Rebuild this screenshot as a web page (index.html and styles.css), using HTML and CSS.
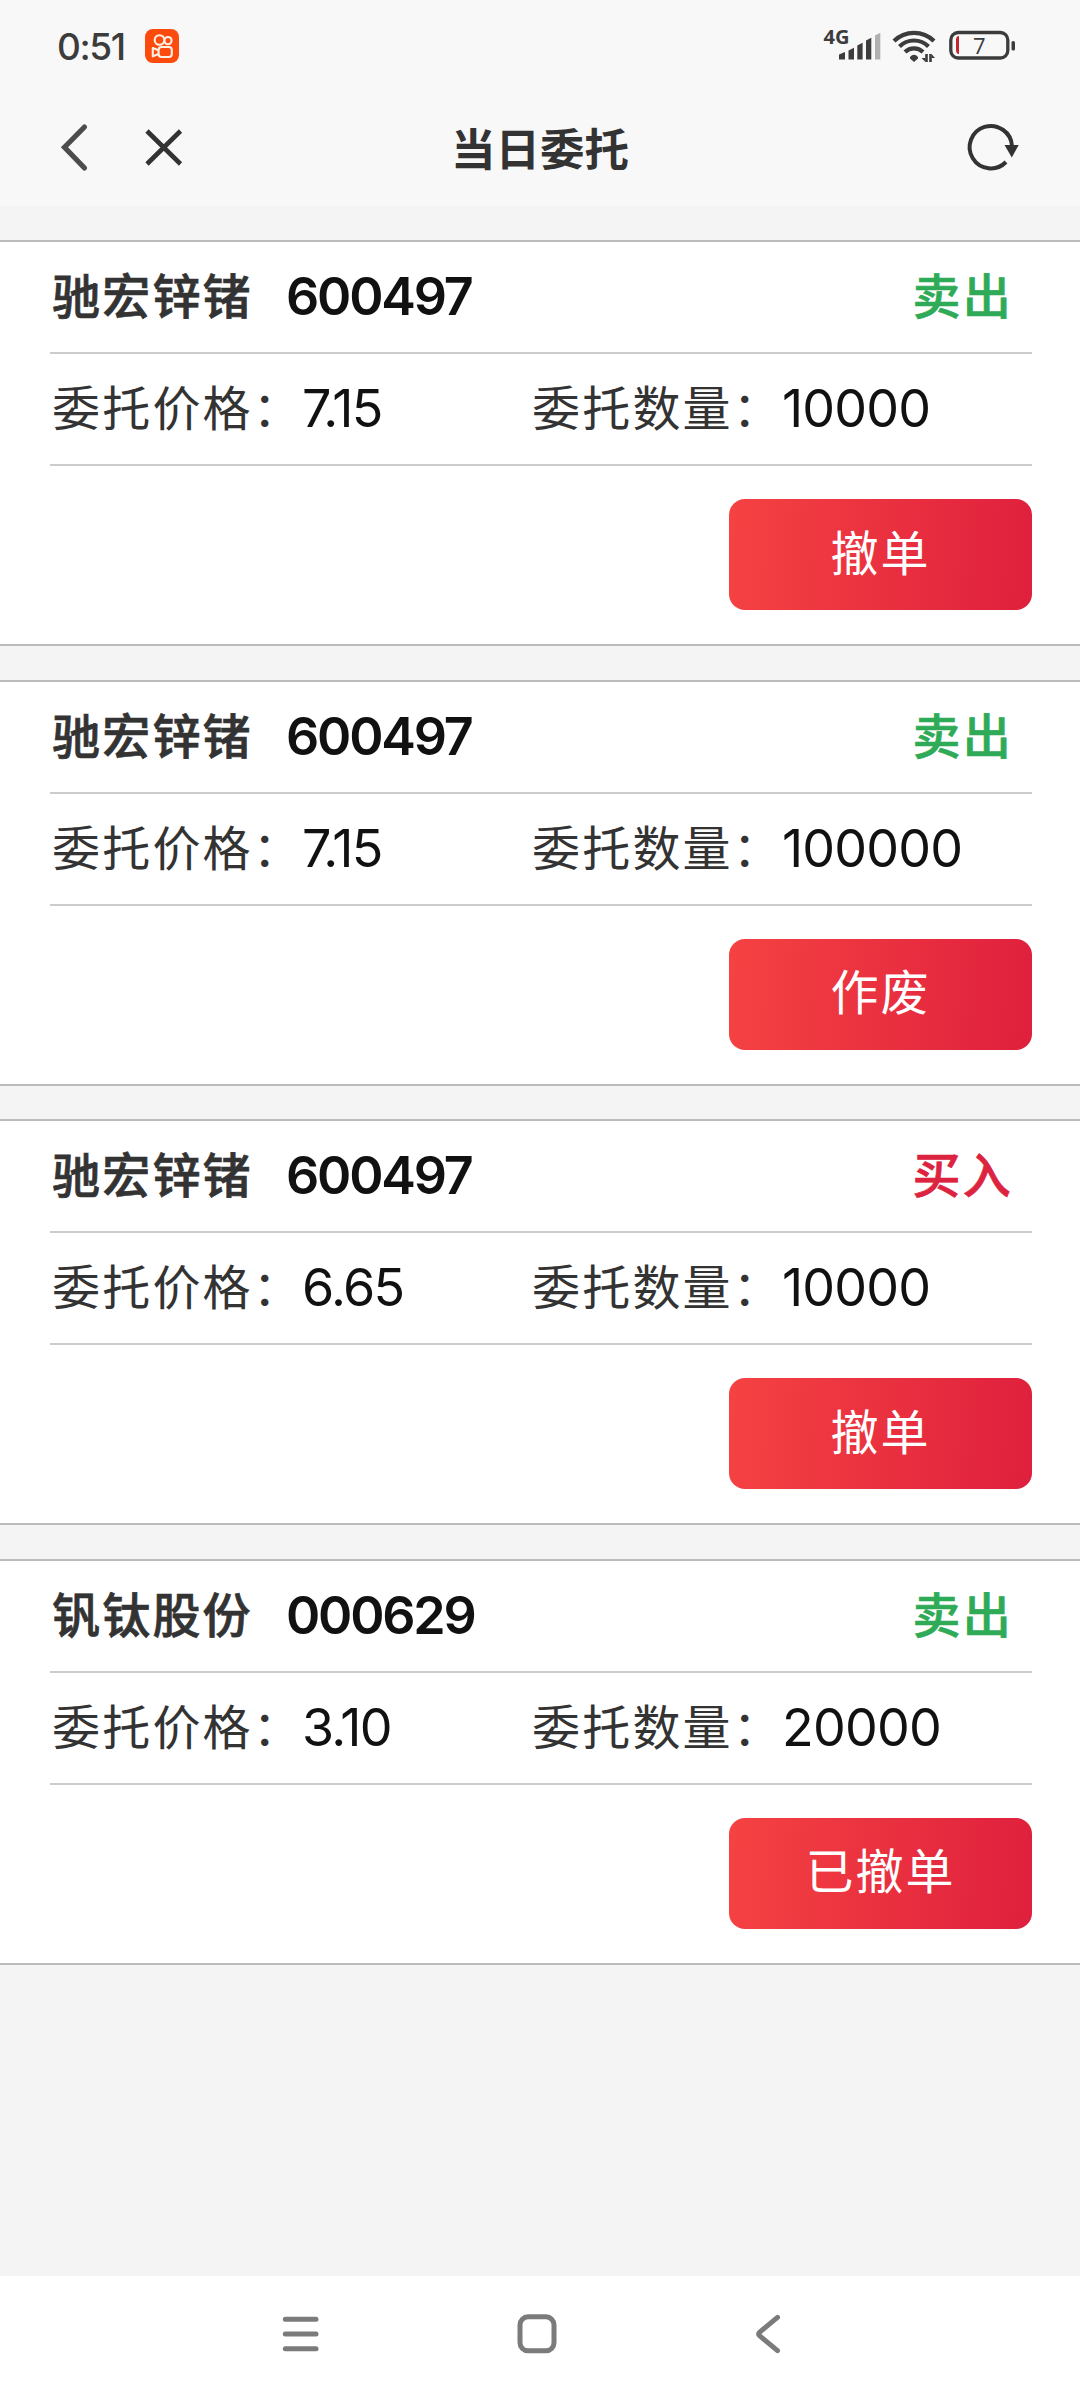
FILE: index.html
```html
<!DOCTYPE html>
<html lang="zh-CN">
<head>
<meta charset="utf-8">
<title>当日委托</title>
<link rel="stylesheet" href="styles.css">
</head>
<body>
<div class="screen">
  <header class="top">
    <div class="status">
      <span class="clock">0:51</span>
      <svg class="app-badge" viewBox="0 0 34 34" width="34" height="34">
        <rect width="34" height="34" rx="8" fill="#fc4b0c"/>
        <g fill="none" stroke="#fff0e4" stroke-width="2.1" stroke-linejoin="round">
          <circle cx="14.5" cy="11" r="4.8"/>
          <circle cx="23" cy="11.6" r="3.6"/>
          <rect x="13.6" y="18" width="13.2" height="10" rx="3"/>
          <path d="M13.4 21.2 7.8 19v8.4l5.6-2.4"/>
        </g>
      </svg>
      <svg class="status-icons" viewBox="820 24 200 42" width="200" height="42">
        <text class="net" x="823.5" y="43.5" textLength="26" lengthAdjust="spacingAndGlyphs">4G</text>
        <g fill="#3c3c3c">
          <path d="M839 54.5l6-2.5v7.5h-6z"/>
          <path d="M848.5 50.5l5.5-2.8v11.8h-5.5z"/>
          <path d="M857.3 45.5l5.3-2.8v16.8h-5.3z"/>
          <path d="M866 40.5l5.3-2.8v21.8H866z"/>
          <path d="M875 35.5l5.3-2.8v26.8H875z" fill="#b0b0b0"/>
        </g>
        <g fill="none" stroke="#3c3c3c" stroke-width="4.2">
          <path d="M894 41a28.5 28.5 0 0 1 40 0"/>
          <path d="M899.5 46.5a20.5 20.5 0 0 1 29 0"/>
          <path d="M905 52a12.8 12.8 0 0 1 18 0"/>
        </g>
        <path d="M910 57q4-4.500 8 0v1.500l-4 3.500-4-3.500z" fill="#3c3c3c"/>
        <path d="M926.500 54v8M930.500 62v-8" fill="none" stroke="#3c3c3c" stroke-width="2.600"/>
        <path d="M921.500 58h4v4zM931.500 54l3.500 4h-3.500z" fill="#3c3c3c"/>
        <rect x="950.8" y="32.500" width="57" height="25.500" rx="7.500" fill="none" stroke="#3c3c3c" stroke-width="3.300"/>
        <rect x="1011.500" y="41" width="3.500" height="9.500" rx="1.500" fill="#3c3c3c"/>
        <path d="M959 36v18q-3 0-3-4v-10q0-4 3-4z" fill="#c0272d"/>
        <text class="charge" x="973" y="54">7</text>
      </svg>
    </div>
    <div class="titlebar">
      <svg class="nav-left" viewBox="56 118 136 60" width="136" height="60" fill="none">
        <path d="M84.500 127 64.500 147.300 84.500 168" stroke="#4c4c4c" stroke-width="5.200" stroke-linecap="round"/>
        <path d="M147 131 180.500 164M180.500 131 147 164" stroke="#333" stroke-width="4.600"/>
      </svg>
      <h1 class="title">当日委托</h1>
      <svg class="refresh" viewBox="964 118 60 60" width="60" height="60">
        <path d="M1012 146A21.200 21.200 0 1 0 1006 162" fill="none" stroke="#333" stroke-width="4"/>
        <path d="M1004.500 145h14.200l-6.900 12.500z" fill="#333"/>
      </svg>
    </div>
  </header>

  <main class="orders">
    <section class="card">
      <div class="row head"><span class="name">驰宏锌锗</span><span class="code">600497</span><span class="side sell">卖出</span></div>
      <div class="row"><span class="label">委托价格：</span><span class="value price">7.15</span><span class="label">委托数量：</span><span class="value">10000</span></div>
      <div class="actions"><button class="btn">撤单</button></div>
    </section>
    <section class="card">
      <div class="row head"><span class="name">驰宏锌锗</span><span class="code">600497</span><span class="side sell">卖出</span></div>
      <div class="row"><span class="label">委托价格：</span><span class="value price">7.15</span><span class="label">委托数量：</span><span class="value">100000</span></div>
      <div class="actions"><button class="btn">作废</button></div>
    </section>
    <section class="card">
      <div class="row head"><span class="name">驰宏锌锗</span><span class="code">600497</span><span class="side buy">买入</span></div>
      <div class="row"><span class="label">委托价格：</span><span class="value price">6.65</span><span class="label">委托数量：</span><span class="value">10000</span></div>
      <div class="actions"><button class="btn">撤单</button></div>
    </section>
    <section class="card">
      <div class="row head"><span class="name">钒钛股份</span><span class="code">000629</span><span class="side sell">卖出</span></div>
      <div class="row"><span class="label">委托价格：</span><span class="value price">3.10</span><span class="label">委托数量：</span><span class="value">20000</span></div>
      <div class="actions"><button class="btn">已撤单</button></div>
    </section>
  </main>

  <nav class="sysnav">
    <svg viewBox="0 0 40 44" width="40" height="44"><path d="M4.300 7.300h30.700M4.300 22h30.700M4.300 36.700h30.700"/></svg>
    <svg viewBox="0 0 44 44" width="44" height="44"><rect x="5" y="4.800" width="34" height="34" rx="8"/></svg>
    <svg viewBox="0 0 30 44" width="30" height="44"><path d="M24.500 5.300 6.500 20.300q-1.800 1.700 0 3.400L24.500 38.700"/></svg>
  </nav>
</div>
</body>
</html>
```

FILE: styles.css
```css
* { box-sizing: border-box; }
body {
  margin: 0;
  background: #f4f4f4;
  font-family: "Inter", "Noto Sans CJK SC", sans-serif;
  color: #333;
}
.screen {
  display: flex;
  flex-direction: column;
  width: 1080px;
  height: 2400px;
}
.top {
  height: 206px;
  background: #f8f8f8;
}
.status {
  display: flex;
  align-items: center;
  height: 92px;
  padding: 0 60px 0 57px;
}
.clock {
  width: 88px;
  font-size: 37px;
  font-weight: 500;
  line-height: 1;
  letter-spacing: -1.4px;
  color: #3c3c3c;
}
.status-icons { margin: -2px 0 0 auto; }
.net { font: 700 20px "Open Sans", sans-serif; fill: #3c3c3c; }
.charge { font: 500 22px "Open Sans", sans-serif; fill: #3c3c3c; }
.titlebar {
  display: flex;
  align-items: center;
  justify-content: space-between;
  height: 112px;
  padding: 0 56px;
}
.nav-left { margin-right: -76px; }
.title {
  margin: 0;
  padding-top: 4px;
  font-size: 44.5px;
  line-height: 60px;
  font-weight: 700;
}
.orders {
  display: flex;
  flex: 1;
  flex-direction: column;
  gap: 33.6px;
  padding-top: 34px;
}
.card {
  height: 406px;
  padding: 0 48px 0 50px;
  background: #fff;
  border: solid #bbb;
  border-width: 2px 0;
}
.row {
  display: flex;
  align-items: center;
  height: 112px;
  border-bottom: 2px solid #ccc;
  font-size: 48px;
  line-height: 70px;
}
.name, .label, .side {
  padding-bottom: 8px;
  font-family: "Noto Sans CJK SC", sans-serif;
  letter-spacing: 2.2px;
  white-space: nowrap;
}
.name, .side {
  font-weight: 500;
  -webkit-text-stroke: 0.7px currentColor;
}
.name { width: 236px; padding-left: 2px; }
.label { width: 252px; padding-left: 2px; }
.code, .value { color: #111; font-size: 52px; }
.code { font-weight: 600; letter-spacing: -2.2px; }
.value { letter-spacing: -0.8px; }
.price { width: 228px; letter-spacing: -1.6px; }
.side { margin-left: auto; padding-right: 19px; }
.sell { color: #2fab58; }
.buy { color: #dc2440; }
.actions {
  display: flex;
  justify-content: flex-end;
  padding-top: 33px;
}
.btn {
  width: 303px;
  height: 111px;
  padding: 0 0 10px;
  border: 0;
  border-radius: 16px;
  background: linear-gradient(94deg, #f54242, #df203d);
  color: #fff;
  font-family: "Noto Sans CJK SC", sans-serif;
  font-size: 48px;
  letter-spacing: 2px;
}
.sysnav {
  display: flex;
  gap: 194px;
  align-items: center;
  height: 124px;
  padding: 0 0 8px 281px;
  background: #fff;
}
.sysnav svg {
  fill: none;
  stroke: #7b7b7b;
  stroke-width: 5;
  stroke-linecap: round;
  stroke-linejoin: round;
}
```
